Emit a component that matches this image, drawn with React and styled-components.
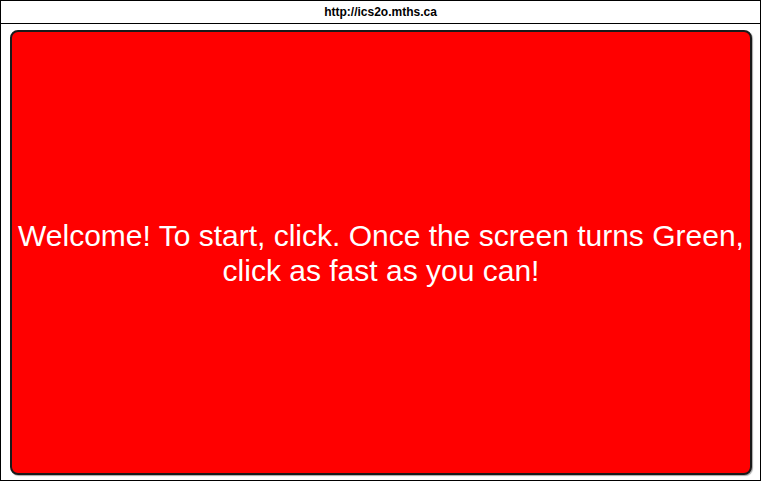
import React from 'react';
import styled, { createGlobalStyle } from 'styled-components';

const GlobalStyle = createGlobalStyle`
  html, body {
    margin: 0;
    padding: 0;
    background: #ffffff;
    font-family: "Liberation Sans", Arial, sans-serif;
  }
`

const Frame = styled.div`
  box-sizing: border-box;
  width: 761px;
  height: 481px;
  border: 1px solid #000;
  display: flex;
  flex-direction: column;
  background: #fff;
`

const UrlBar = styled.div`
  height: 22px;
  border-bottom: 1px solid #000;
  display: flex;
  align-items: center;
  justify-content: center;
  font-size: 12px;
  font-weight: bold;
  color: #000;
`

const Stage = styled.div`
  flex: 1;
  display: flex;
  padding: 6px 8px 5px 9px;
`

const Screen = styled.div`
  flex: 1;
  box-sizing: border-box;
  background: ${props => props.color};
  border: 2px solid #1a1a1a;
  border-radius: 8px;
  box-shadow: 1px 1px 1px rgba(0, 0, 0, 0.35);
  display: flex;
  align-items: center;
  justify-content: center;
  text-align: center;
  color: #fff;
  font-size: 30px;
  line-height: 35px;
  padding: 0 4px;
`

const App = () => {
  return (
    <>
      <GlobalStyle />
      <Frame>
        <UrlBar>http://ics2o.mths.ca</UrlBar>
        <Stage>
          <Screen color="#ff0000">
            Welcome! To start, click. Once the screen turns Green, click as fast as you can!
          </Screen>
        </Stage>
      </Frame>
    </>
  );
};

export default App;
